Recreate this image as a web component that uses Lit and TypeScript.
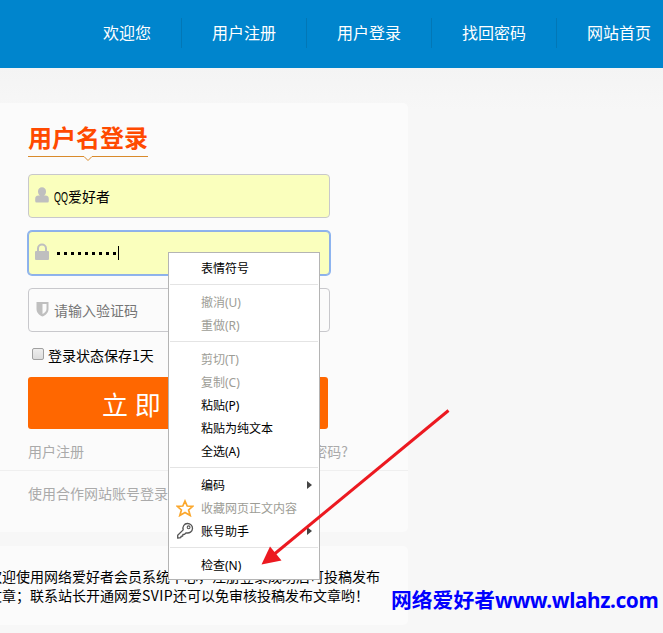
import { LitElement, html, css, svg, nothing } from "lit";
import { customElement } from "lit/decorators.js";
import { classMap } from "lit/directives/class-map.js";

type Entry = { label: string; off?: boolean; icon?: "star" | "key"; sub?: boolean };

const NAV = ["欢迎您", "用户注册", "用户登录", "找回密码", "网站首页"];

const GROUPS: Entry[][] = [
  [{ label: "表情符号" }],
  [{ label: "撤消(U)", off: true }, { label: "重做(R)", off: true }],
  [
    { label: "剪切(T)", off: true },
    { label: "复制(C)", off: true },
    { label: "粘贴(P)" },
    { label: "粘贴为纯文本" },
    { label: "全选(A)" },
  ],
  [
    { label: "编码", sub: true },
    { label: "收藏网页正文内容", off: true, icon: "star" },
    { label: "账号助手", icon: "key", sub: true },
  ],
  [{ label: "检查(N)" }],
];

const ICONS = {
  star: svg`<path d="M9 2 L11.200 7 L16.600 7.300 L12.600 11 L14.200 16.500 L9 13.500 L3.800 16.500 L5.400 11 L1.400 7.300 L6.800 7 Z" fill="none" stroke="#fba72c" stroke-width="1.7" stroke-linejoin="miter"/>`,
  key: svg`<path d="M7.2 7.9 C6.2 4.6 8.3 1.6 11.3 1.5 C14.3 1.4 16.6 3.6 16.5 6.4 C16.4 9.6 13.4 11.6 10.2 10.8 L8.6 12.3 L6.9 12.5 L6.7 14 L5 14.3 L4.8 15.6 L1.7 16.2 L1.7 13.2 Z" fill="none" stroke="#555" stroke-width="1.3" stroke-linejoin="round"/><circle cx="12.6" cy="5.3" r="1.4" fill="none" stroke="#555" stroke-width="1.1"/>`,
};

@customElement("context-menu")
export class ContextMenu extends LitElement {
  static styles = css`
    :host {
      display: block;
      box-sizing: border-box;
      width: 152px;
      height: 328px;
      padding-top: 4px;
      border: 1px solid #b4b4b4;
      background: #fff;
      font: 12px/23px "Noto Sans", "Noto Sans CJK SC", sans-serif;
      color: #000;
    }
    .rule {
      height: 1px;
      margin: 4px 1px 6px;
      background: #e4e4e4;
    }
    .item {
      display: grid;
      grid-template-columns: 32px 1fr 10px;
      height: 23px;
      align-items: center;
      white-space: nowrap;
    }
    .off {
      color: #9d9d96;
    }
    .icon {
      width: 18px;
      height: 18px;
      margin: -2px 0 0 7px;
    }
    .label {
      grid-column: 2;
    }
    .tri {
      grid-column: 3;
      width: 0;
      border: 4px solid transparent;
      border-left: 5px solid #444;
      border-right: 0;
      justify-self: start;
      margin: -1px 0 0 -2px;
    }
  `;
  render() {
    return GROUPS.map(
      (g, i) => html`${i ? html`<div class="rule"></div>` : nothing}
        ${g.map(
          (e) => html`<div class=${classMap({ item: true, off: !!e.off })}>
            ${e.icon ? html`<svg class="icon" viewBox="0 0 18 18">${ICONS[e.icon]}</svg>` : nothing}
            <span class="label">${e.label}</span>
            ${e.sub ? html`<i class="tri"></i>` : nothing}
          </div>`
        )}`
    );
  }
}

@customElement("app-root")
export class AppRoot extends LitElement {
  static styles = css`
    :host {
      display: block;
      position: relative;
      width: 663px;
      height: 633px;
      overflow: hidden;
      background: linear-gradient(#f4f4f4 68px, #f7f7f7 110px);
      font: 14px/20px "Noto Sans CJK SC", sans-serif;
      color: #000;
    }
    .nav {
      display: flex;
      align-items: flex-start;
      box-sizing: border-box;
      height: 68px;
      padding: 18px 0 0 73px;
      background: #0085cd;
      color: #fff;
      font-size: 16px;
    }
    .nav a {
      flex: none;
      height: 30px;
      padding: 0 30px;
      line-height: 29px;
      border-right: 1px solid #0277b6;
    }
    .nav a:last-child {
      border: 0;
    }
    .card {
      box-sizing: border-box;
      width: 408px;
      background: #fbfbfb;
      border-radius: 0 5px 5px 0;
      overflow: hidden;
    }
    .login {
      height: 429px;
      margin-top: 35px;
      padding: 18px 0 0 28px;
    }
    .title {
      margin: 0;
      width: 120px;
      font: bold 24px/32px "Noto Sans CJK SC", sans-serif;
      color: #ff4a00;
    }
    .line {
      display: block;
      width: 120px;
      height: 8px;
      margin: 1px 0 12px;
    }
    .field {
      box-sizing: border-box;
      display: flex;
      align-items: center;
      width: 302px;
      height: 44px;
      margin-bottom: 13px;
      padding-left: 6px;
      border: 1px solid #c8c8cc;
      border-radius: 4px;
      background: #fbfbfb;
      color: #757575;
    }
    .filled {
      background: #faffbd;
      color: #000;
    }
    .focus {
      border-color: #8fb0e6;
      box-shadow: 0 0 0 1px #8db4f0;
    }
    .field svg {
      width: 14px;
      height: 18px;
      margin: -2px 5px 0 0;
      fill: #bfbfbf;
    }
    .user {
      line-height: 22px;
    }
    .q {
      font-family: "Liberation Sans", sans-serif;
      display: inline-block;
      width: 14px;
      transform: scaleX(0.64);
      transform-origin: 0 50%;
    }
    .dots {
      display: flex;
      align-items: center;
      gap: 4px;
      padding-left: 3px;
    }
    .dot {
      width: 3px;
      height: 3px;
      background: #000;
    }
    .caret {
      width: 1px;
      height: 14px;
      margin-left: -2px;
      background: #000;
    }
    .keep {
      display: flex;
      align-items: center;
      height: 20px;
      margin: 0 0 12px 4px;
    }
    .box {
      box-sizing: border-box;
      width: 12px;
      height: 12px;
      margin: -3px 4px 0 0;
      border: 1px solid #a0a0a0;
      border-radius: 2px;
      background: linear-gradient(#eee, #dcdcdc);
    }
    .submit {
      box-sizing: border-box;
      width: 300px;
      height: 52px;
      padding-left: 74px;
      border-radius: 3px;
      background: #ff6700;
      color: #fff;
      font-size: 26px;
      line-height: 53px;
      word-spacing: 1px;
    }
    .links {
      display: flex;
      justify-content: space-between;
      width: 320px;
      height: 41px;
      line-height: 44px;
      color: #aaa;
    }
    .partner {
      margin-left: -28px;
      padding-left: 28px;
      border-top: 1px solid #efefef;
      line-height: 44px;
      color: #aaa;
    }
    .notice {
      height: 79px;
      margin-top: 14px;
      padding-top: 21px;
      line-height: 19px;
      white-space: nowrap;
    }
    .notice p {
      margin: 0 0 0 -12px;
    }
    .latin {
      letter-spacing: 0.4px;
    }
    .menu {
      position: absolute;
      left: 168px;
      top: 252px;
    }
    .arrow {
      position: absolute;
      inset: 0;
      width: 663px;
      height: 633px;
    }
    .mark {
      position: absolute;
      left: 391px;
      top: 585px;
      font: bold 20.8px/30px "Noto Sans", "Noto Sans CJK SC", sans-serif;
      color: #0000fe;
      white-space: nowrap;
    }
    .site {
      letter-spacing: -0.4px;
    }
  `;
  render() {
    return html`
      <nav class="nav">${NAV.map((n) => html`<a>${n}</a>`)}</nav>
      <section class="card login">
        <h1 class="title">用户名登录</h1>
        <svg class="line" viewBox="0 0 120 8">
          <path d="M0 2.5H56L60 6.5L64 2.5H120" fill="none" stroke="#d98a2b" />
        </svg>
        <div class="field filled">
          <svg viewBox="0 0 14 18">
            <path d="M7 1.200a4 4 0 0 1 4 4.200C11 7.500 10 9 9 9.500H10.500C13 9.500 13.800 11 13.800 13V15Q13.800 16.500 12.500 16.500H1.500Q.2 16.500 .2 15V13C.2 11 1 9.500 3.500 9.500H5C4 9 3 7.500 3 5.400A4 4 0 0 1 7 1.200Z" />
          </svg>
          <span class="user"><span class="q">QQ</span>爱好者</span>
        </div>
        <div class="field filled focus">
          <svg viewBox="0 0 14 18">
            <path fill-rule="evenodd" d="M2 8V5.500A5 5 0 0 1 12 5.500V8H13Q14 8 14 9V16Q14 17 13 17H1Q0 17 0 16V9Q0 8 1 8ZM4 8H10V5.500A3 3 0 0 0 4 5.500Z" />
          </svg>
          <div class="dots">
            ${Array.from({ length: 9 }, () => html`<i class="dot"></i>`)}<i class="caret"></i>
          </div>
        </div>
        <div class="field">
          <svg viewBox="0 0 14 18">
            <path fill-rule="evenodd" d="M1.500 2H13.500V9C13.500 12.500 11 15 7.500 16.500C4 15 1.500 12.500 1.500 9ZM7.500 4V14C10 12.800 11.500 11 11.500 9V4Z" />
          </svg>
          <span>请输入验证码</span>
        </div>
        <div class="keep"><i class="box"></i>登录状态保存1天</div>
        <div class="submit">立 即 登 录</div>
        <div class="links"><span>用户注册</span><span>忘记密码?</span></div>
        <div class="partner">使用合作网站账号登录</div>
      </section>
      <section class="card notice">
        <p>欢迎使用网络爱好者会员系统中心，注册登录成功后可投稿发布</p>
        <p>文章；联系站长开通网爱<span class="latin">SVIP</span>还可以免审核投稿发布文章哟！</p>
      </section>
      <context-menu class="menu"></context-menu>
      <div class="mark">网络爱好者<span class="site">www.wlahz.com</span></div>
      <svg class="arrow" viewBox="0 0 663 633">
        <path d="M448.500 410.500L272 556" stroke="#ec1920" stroke-width="3" />
        <path d="M261.500 564.500L270 546.500L281.500 560.500Z" fill="#ec1920" />
      </svg>
    `;
  }
}
